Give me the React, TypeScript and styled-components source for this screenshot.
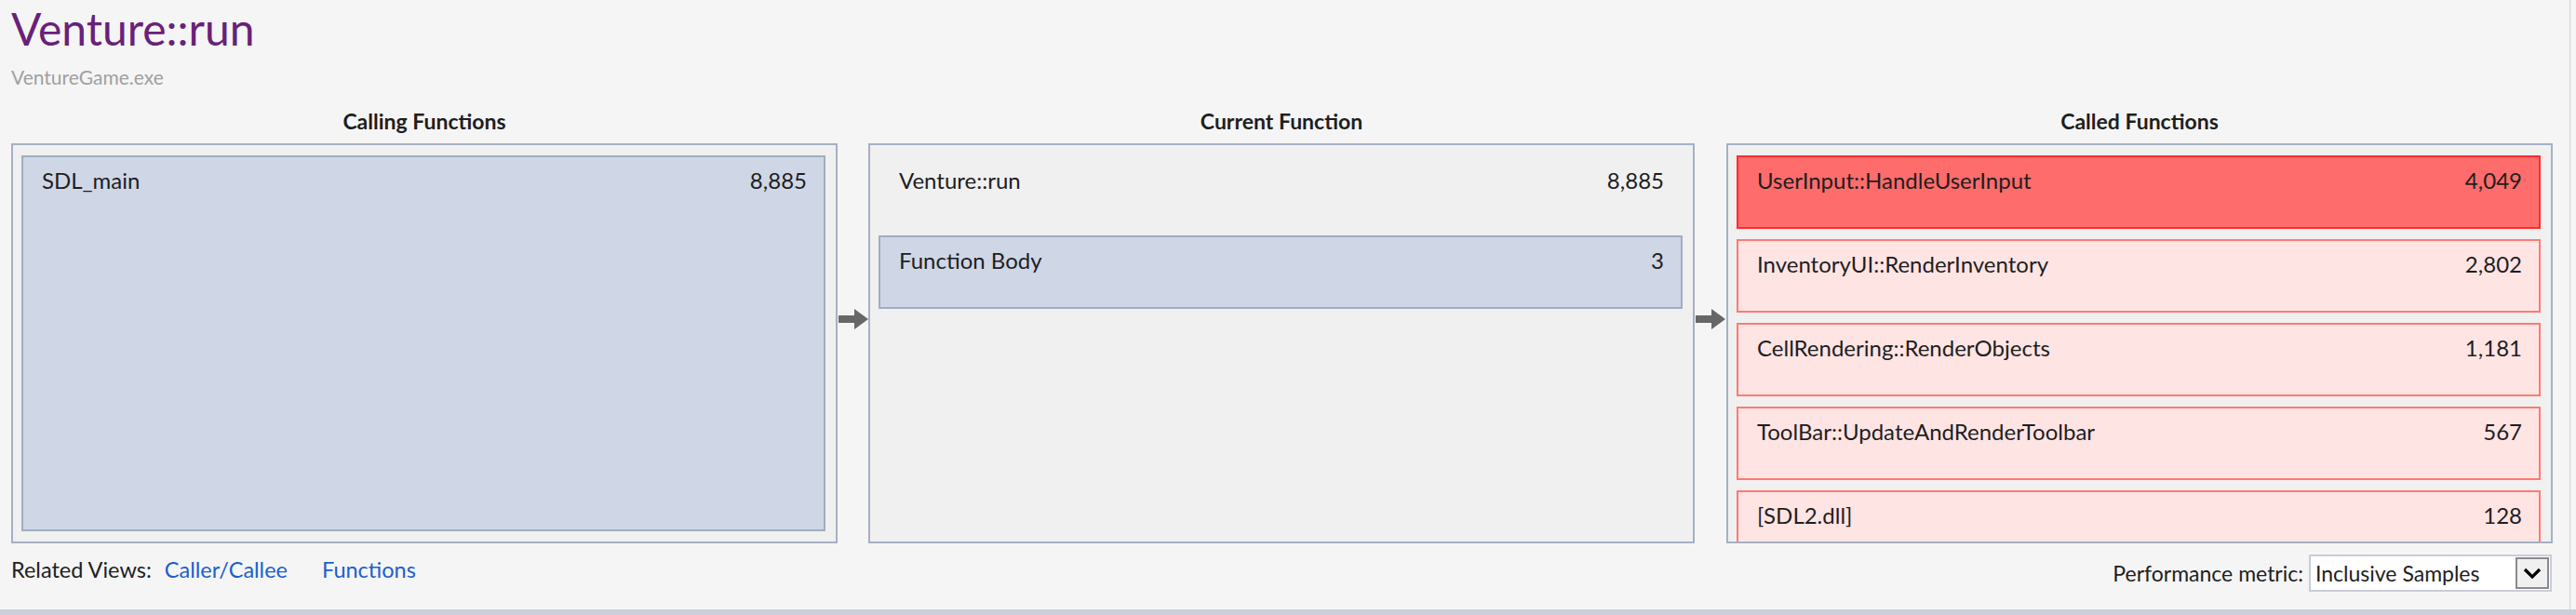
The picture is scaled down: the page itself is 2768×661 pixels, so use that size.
import React from "react";
import styled, { createGlobalStyle } from "styled-components";

const GlobalStyle = createGlobalStyle`
  html, body { margin: 0; padding: 0; background: #f5f5f5; }
  body { font-family: Lato, "Noto Sans", sans-serif; color: #1e1e1e; }
  * { box-sizing: border-box; }
`;

const Window = styled.div`
  width: 2768px;
  height: 661px;
  display: flex;
  flex-direction: column;
  background: #f5f5f5;
  overflow: hidden;
`;

const Content = styled.div`
  flex: 1;
  width: 2762px;
  border-right: 1px solid #d2d2d8;
  padding: 3px 0 0 12px;
  display: flex;
  flex-direction: column;
`;

const BottomBar = styled.div`
  height: 6px;
  background: #cccedb;
`;

const Title = styled.h1`
  margin: 0;
  font-size: 48px;
  line-height: 56px;
  font-weight: 400;
  color: #68217a;
`;

const Subtitle = styled.div`
  margin-top: 10px;
  font-size: 21px;
  line-height: 28px;
  color: #a0a0a0;
`;

const Columns = styled.div`
  margin-top: 19px;
  display: grid;
  grid-template-columns: 888px 33px 888px 34px 888px;
  align-items: start;
`;

const Column = styled.section`
  display: flex;
  flex-direction: column;
`;

const ColumnTitle = styled.div`
  height: 28px;
  line-height: 28px;
  margin-bottom: 10px;
  text-align: center;
  font-size: 23px;
  font-weight: 700;
  color: #1e1e1e;
`;

const Panel = styled.div<{ $gap: number }>`
  height: 430px;
  background: #f0f0f0;
  border: 2px solid #a4b0c4;
  padding: 11px 11px 11px 9px;
  display: flex;
  flex-direction: column;
  gap: ${(p) => p.$gap}px;
  overflow: hidden;
`;

type Tone = "caller" | "plain" | "hot" | "warm";

const toneBg: Record<Tone, string> = {
  caller: "#cfd6e6",
  plain: "transparent",
  hot: "#ff6c6c",
  warm: "#ffe4e4",
};
const toneBorder: Record<Tone, string> = {
  caller: "#a0adc2",
  plain: "transparent",
  hot: "#ff2b2b",
  warm: "#ff7a72",
};

const Row = styled.div<{ $tone: Tone; $fill?: boolean }>`
  flex: ${(p) => (p.$fill ? "1" : "0 0 79px")};
  height: ${(p) => (p.$fill ? "auto" : "79px")};
  background: ${(p) => toneBg[p.$tone]};
  border: 2px solid ${(p) => toneBorder[p.$tone]};
  padding: 11px 18px 0 20px;
  display: flex;
  justify-content: space-between;
  align-items: flex-start;
  font-size: 24px;
  line-height: 28px;
  color: #1e1e1e;
`;

const ArrowCell = styled.div`
  padding-top: 216px;
  display: flex;
  justify-content: center;
`;

const Footer = styled.div`
  flex: 1;
  display: flex;
  justify-content: space-between;
  align-items: flex-start;
  padding: 12px 19px 0 0;
`;

const Related = styled.div`
  padding-top: 2px;
  display: flex;
  align-items: center;
  font-size: 23.5px;
  line-height: 28px;
  color: #1e1e1e;
`;

const Link = styled.a<{ $gap: number }>`
  margin-left: ${(p) => p.$gap}px;
  color: #1b5fcf;
  text-decoration: none;
  cursor: pointer;
`;

const MetricGroup = styled.div`
  display: flex;
  align-items: center;
  gap: 6px;
  font-size: 23px;
  color: #1e1e1e;
`;

const Select = styled.div`
  width: 261px;
  height: 40px;
  border: 2px solid #c9ccd9;
  background: #ffffff;
  display: flex;
  align-items: center;
  justify-content: space-between;
  padding: 0 1px 0 5px;
  font-size: 23px;
  line-height: 28px;
`;

const DropButton = styled.div`
  width: 36px;
  height: 34px;
  background: #f0f0f0;
  border: 2px solid #8a8a8a;
  display: flex;
  align-items: center;
  justify-content: center;
`;

const Arrow = () => (
  <svg width="32" height="22" viewBox="0 0 32 22">
    <rect x="0" y="7" width="19" height="8" fill="#676767" />
    <polygon points="17,0 32,11 17,22" fill="#676767" />
  </svg>
);

const Chevron = () => (
  <svg width="20" height="13" viewBox="0 0 20 13">
    <polyline points="2,2 10,10 18,2" fill="none" stroke="#000" strokeWidth="3.2" />
  </svg>
);

const called: [string, string, Tone][] = [
  ["UserInput::HandleUserInput", "4,049", "hot"],
  ["InventoryUI::RenderInventory", "2,802", "warm"],
  ["CellRendering::RenderObjects", "1,181", "warm"],
  ["ToolBar::UpdateAndRenderToolbar", "567", "warm"],
  ["[SDL2.dll]", "128", "warm"],
];

export default function App() {
  return (
    <>
      <GlobalStyle />
      <Window>
        <Content>
          <Title>Venture::run</Title>
          <Subtitle>VentureGame.exe</Subtitle>
          <Columns>
            <Column>
              <ColumnTitle>Calling Functions</ColumnTitle>
              <Panel $gap={11}>
                <Row $tone="caller" $fill>
                  <span>SDL_main</span>
                  <span>8,885</span>
                </Row>
              </Panel>
            </Column>
            <ArrowCell>
              <Arrow />
            </ArrowCell>
            <Column>
              <ColumnTitle>Current Function</ColumnTitle>
              <Panel $gap={7}>
                <Row $tone="plain">
                  <span>Venture::run</span>
                  <span>8,885</span>
                </Row>
                <Row $tone="caller">
                  <span>Function Body</span>
                  <span>3</span>
                </Row>
              </Panel>
            </Column>
            <ArrowCell>
              <Arrow />
            </ArrowCell>
            <Column>
              <ColumnTitle>Called Functions</ColumnTitle>
              <Panel $gap={11}>
                {called.map(([name, val, tone]) => (
                  <Row key={name} $tone={tone}>
                    <span>{name}</span>
                    <span>{val}</span>
                  </Row>
                ))}
              </Panel>
            </Column>
          </Columns>
          <Footer>
            <Related>
              Related Views:
              <Link $gap={14}>Caller/Callee</Link>
              <Link $gap={37}>Functions</Link>
            </Related>
            <MetricGroup>
              <span>Performance metric:</span>
              <Select>
                <span>Inclusive Samples</span>
                <DropButton>
                  <Chevron />
                </DropButton>
              </Select>
            </MetricGroup>
          </Footer>
        </Content>
        <BottomBar />
      </Window>
    </>
  );
}
